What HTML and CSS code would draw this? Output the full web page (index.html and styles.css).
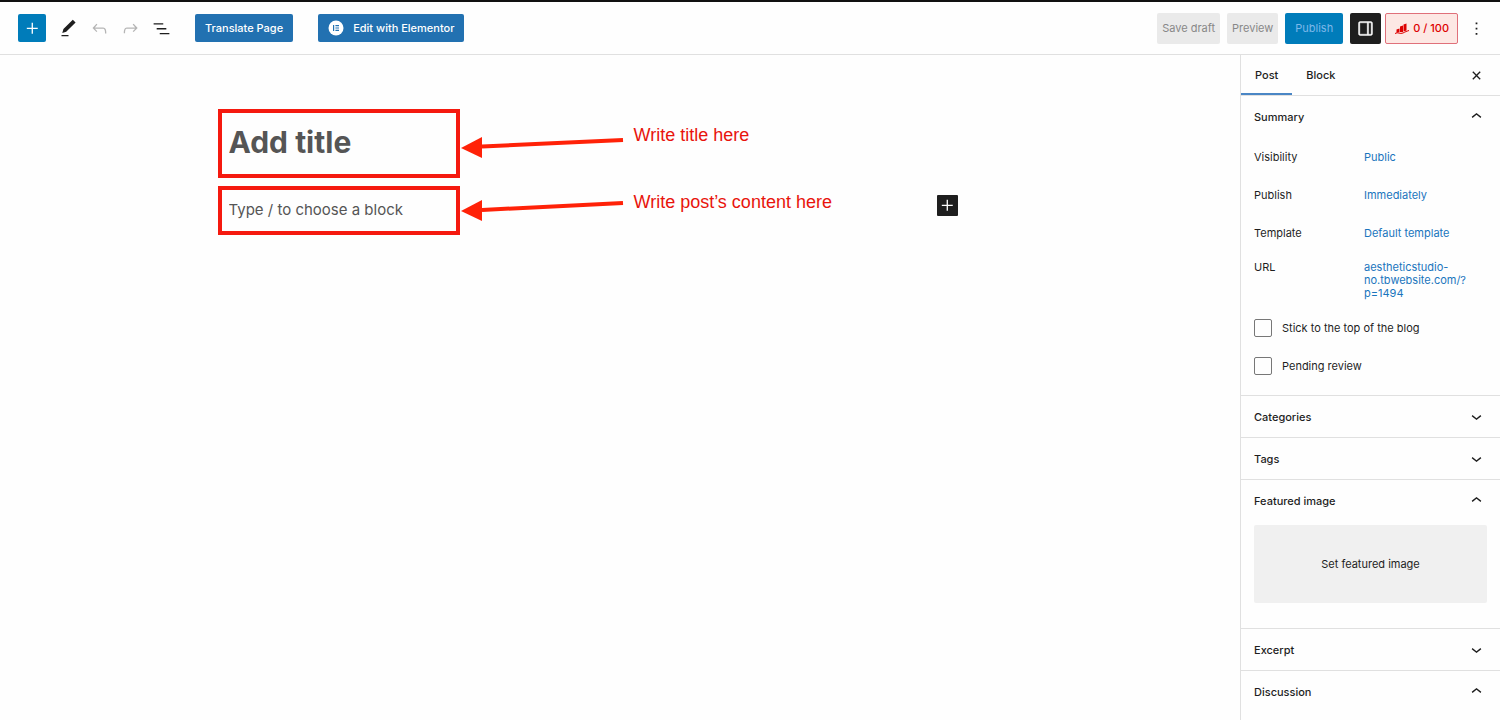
FILE: index.html
```html
<!DOCTYPE html>
<html lang="en">
<head>
  <meta charset="UTF-8">
  <meta name="viewport" content="width=device-width, initial-scale=1.0">
  <title>Add New Post</title>
  <link rel="stylesheet" href="styles.css">
</head>
<body>
  <header class="toolbar">
    <div class="toolbar-tools">
      <button class="icon-btn inserter" aria-label="Toggle block inserter">
        <svg class="icon" viewBox="0 0 24 24"><path d="M11 12.5V18h1.5v-5.5H18V11h-5.5V5.5H11V11H5.5v1.5H11z"/></svg>
      </button>
      <button class="icon-btn" aria-label="Tools">
        <svg class="icon" viewBox="0 0 24 24"><path d="M20.1 5.1L16.9 2 6.2 12.7l-1.3 4.4 4.5-1.3L20.1 5.1zM4 20.8h8v-1.5H4v1.5z"/></svg>
      </button>
      <button class="icon-btn" aria-label="Undo" disabled>
        <svg class="icon" viewBox="0 0 24 24"><path d="M18.3 11.7c-.6-.6-1.4-.9-2.3-.9H6.7l2.9-3.3-1.1-1-4.5 5L8.5 16l1-1-2.7-2.7H16c.5 0 .9.2 1.3.5 1 1 1 3.4 1 4.5v.3h1.5v-.2c0-1.5 0-4.3-1.5-5.7z"/></svg>
      </button>
      <button class="icon-btn" aria-label="Redo" disabled>
        <svg class="icon" viewBox="0 0 24 24"><path d="M15.6 6.5l-1.1 1 2.9 3.3H8c-.9 0-1.7.3-2.3.9-1.4 1.5-1.4 4.2-1.4 5.6v.2h1.5v-.3c0-1.1 0-3.5 1-4.5.3-.3.7-.5 1.3-.5h9.2L14.5 15l1.1 1.1 4.6-4.6-4.6-5z"/></svg>
      </button>
      <button class="icon-btn" aria-label="Document overview">
        <svg class="icon" viewBox="0 0 24 24"><path d="M3 6h11v1.5H3V6zm3.5 5.5h11V13h-11v-1.5zM21 17H10v1.5h11V17z"/></svg>
      </button>
    </div>
    <div class="toolbar-plugins">
      <button class="btn btn-blue">Translate Page</button>
      <button class="btn btn-blue btn-elementor">
        <svg class="elementor-logo" viewBox="0 0 16 16">
          <circle cx="8" cy="8" r="7.5" fill="#fff"/>
          <path d="M5 5h1.200v6H5zM7.400 5H11v1.200H7.400zM7.400 7.400H11v1.200H7.400zM7.400 9.800H11V11H7.400z" fill="#2271b1"/>
        </svg>
        Edit with Elementor
      </button>
    </div>
    <div class="toolbar-settings">
      <button class="btn btn-gray" disabled>Save draft</button>
      <button class="btn btn-gray" disabled>Preview</button>
      <button class="btn btn-publish" disabled>Publish</button>
      <div class="toolbar-panels">
        <button class="btn btn-sidebar" aria-label="Settings">
          <svg class="icon" viewBox="0 0 24 24"><path stroke="currentColor" stroke-width=".5" d="M18 4H6c-1.1 0-2 .9-2 2v12c0 1.1.9 2 2 2h12c1.1 0 2-.9 2-2V6c0-1.1-.9-2-2-2zm-4 14.5H6c-.3 0-.5-.2-.5-.5V6c0-.3.2-.5.5-.5h8v13zm4.5-.5c0 .3-.2.5-.5.5h-2.5v-13H18c.3 0 .5.2.5.5v12z"/></svg>
        </button>
        <button class="btn btn-score">
          <svg class="score-icon" viewBox="0 0 16 14"><path d="M2.500 8.500l3-1v3.500l-3 .8zM6 5.500l3-1V11H6zM9.500 3.500l3-1v7l-3 1z"/><path d="M1 12.500c3-2 5 1 8-.500s3-1.500 6-2.500" fill="none" stroke="currentColor"/></svg>
          0 / 100
        </button>
        <button class="icon-btn" aria-label="Options">
          <svg class="icon" viewBox="0 0 24 24"><path d="M13 19h-2v-2h2v2zm0-6h-2v-2h2v2zm0-6h-2V5h2v2z"/></svg>
        </button>
      </div>
    </div>
  </header>

  <div class="editor">
    <main class="canvas">
      <div class="row">
        <input class="field title-field" type="text" placeholder="Add title" aria-label="Add title">
        <svg class="arrow" viewBox="0 0 164 69"><path d="M22 37.5L163 31" stroke="#ff2208" stroke-width="4"/><path d="M1 39L22 28v21z" fill="#ff2208"/></svg>
        <p class="note title-note">Write title here</p>
      </div>
      <div class="row">
        <input class="field block-field" type="text" placeholder="Type / to choose a block" aria-label="Add block">
        <svg class="arrow" viewBox="0 0 164 49"><path d="M22 24L163 17" stroke="#ff2208" stroke-width="4"/><path d="M1 25L22 14v21z" fill="#ff2208"/></svg>
        <p class="note">Write post’s content here</p>
        <button class="add-block" aria-label="Add block">
          <svg class="icon" viewBox="0 0 24 24"><path d="M11 12.5V18h1.5v-5.5H18V11h-5.5V5.5H11V11H5.5v1.5H11z"/></svg>
        </button>
      </div>
    </main>

    <aside class="sidebar">
      <div class="tabs">
        <button class="tab active">Post</button>
        <button class="tab">Block</button>
        <button class="close" aria-label="Close settings">
          <svg class="icon" viewBox="0 0 24 24"><path d="M12 13.06l3.712 3.713 1.061-1.06L13.061 12l3.712-3.712-1.06-1.06L12 10.938 8.288 7.227l-1.061 1.06L10.939 12l-3.712 3.712 1.06 1.061L12 13.061z"/></svg>
        </button>
      </div>

      <section class="panel">
        <button class="panel-title">Summary
          <svg class="icon" viewBox="0 0 24 24"><path d="M6.5 12.4L12 8l5.5 4.4-.9 1.2L12 10l-4.5 3.6-1-1.2z"/></svg>
        </button>
        <div class="summary">
          <div class="summary-row"><span>Visibility</span><a href="#">Public</a></div>
          <div class="summary-row"><span>Publish</span><a href="#">Immediately</a></div>
          <div class="summary-row"><span>Template</span><a href="#">Default template</a></div>
          <div class="summary-row url-row"><span>URL</span><a href="#">aestheticstudio-<br>no.tbwebsite.com/?<br>p=1494</a></div>
          <label class="check-row"><input type="checkbox">Stick to the top of the blog</label>
          <label class="check-row"><input type="checkbox">Pending review</label>
        </div>
      </section>

      <section class="panel">
        <button class="panel-title">Categories
          <svg class="icon" viewBox="0 0 24 24"><path d="M17.5 11.6L12 16l-5.5-4.4.9-1.2L12 14l4.5-3.6 1 1.2z"/></svg>
        </button>
      </section>
      <section class="panel">
        <button class="panel-title">Tags
          <svg class="icon" viewBox="0 0 24 24"><path d="M17.5 11.6L12 16l-5.5-4.4.9-1.2L12 14l4.5-3.6 1 1.2z"/></svg>
        </button>
      </section>
      <section class="panel">
        <button class="panel-title">Featured image
          <svg class="icon" viewBox="0 0 24 24"><path d="M6.5 12.4L12 8l5.5 4.4-.9 1.2L12 10l-4.5 3.6-1-1.2z"/></svg>
        </button>
        <div class="featured">
          <button class="featured-btn">Set featured image</button>
        </div>
      </section>
      <section class="panel">
        <button class="panel-title">Excerpt
          <svg class="icon" viewBox="0 0 24 24"><path d="M17.5 11.6L12 16l-5.5-4.4.9-1.2L12 14l4.5-3.6 1 1.2z"/></svg>
        </button>
      </section>
      <section class="panel">
        <button class="panel-title">Discussion
          <svg class="icon" viewBox="0 0 24 24"><path d="M6.5 12.4L12 8l5.5 4.4-.9 1.2L12 10l-4.5 3.6-1-1.2z"/></svg>
        </button>
      </section>
    </aside>
  </div>
</body>
</html>
```
FILE: styles.css
```css
* {
  box-sizing: border-box;
}

body {
  display: flex;
  flex-direction: column;
  min-height: 100vh;
  margin: 0;
  background: #fefefe;
  color: #1e1e1e;
  font-family: Inter, "Liberation Sans", sans-serif;
  font-size: 11px;
}

button {
  padding: 0;
  border: none;
  background: none;
  color: inherit;
  font: inherit;
  cursor: pointer;
}

button:disabled {
  cursor: default;
}

a {
  color: #1a75bd;
  text-decoration: none;
}

.icon {
  display: block;
  width: 21px;
  height: 21px;
  fill: currentColor;
}

/* Toolbar */
.toolbar {
  display: flex;
  align-items: center;
  padding: 0 10px 0 18px;
  height: 55px;
  border-top: 2px solid #111;
  border-bottom: 1px solid #e0e0e0;
}

.toolbar-tools {
  display: flex;
  gap: 3px;
}

.icon-btn {
  display: flex;
  align-items: center;
  justify-content: center;
  width: 28px;
  height: 28px;
}

.icon-btn:disabled {
  color: #b5b5b5;
}

.inserter {
  margin-right: 5px;
  border-radius: 2px;
  background: #007cba;
  color: #fff;
}

.toolbar-plugins {
  display: flex;
  gap: 25px;
  margin-left: 20px;
}

.toolbar-settings {
  display: flex;
  align-items: center;
  gap: 7px;
  margin-left: auto;
}

.toolbar-panels {
  display: flex;
  align-items: center;
  gap: 4px;
}

.btn {
  display: flex;
  align-items: center;
  justify-content: center;
  height: 31px;
  padding: 0 5px;
  border-radius: 2px;
  white-space: nowrap;
}

.btn-blue {
  height: 28px;
  padding: 0 10px;
  background: #2271b1;
  color: #fff;
  font-weight: 500;
}

.btn-elementor {
  gap: 9px;
}

.elementor-logo {
  width: 16px;
  height: 16px;
}

.btn-gray {
  background: #eaeaea;
  color: #888;
}

.btn-publish {
  padding: 0 10px;
  background: #007cba;
  color: #7cb8ea;
}

.btn-sidebar {
  width: 31px;
  background: #1e1e1e;
  color: #fff;
}

.btn-score {
  gap: 3px;
  padding: 0 8px;
  border: 1px solid #e0707a;
  background: #fde8e4;
  color: #d00;
  font-weight: 500;
}

.score-icon {
  width: 16px;
  height: 14px;
  fill: currentColor;
}

/* Editor */
.editor {
  display: flex;
  flex: 1;
}

.canvas {
  display: flex;
  flex: 1;
  flex-direction: column;
  gap: 8px;
  padding: 54px 20px 20px 14.5%;
}

.row {
  display: flex;
  align-items: flex-start;
  max-width: 740px;
}

.field {
  width: 242px;
  padding: 0 7px;
  border: 4px solid #f5190f;
  background: none;
  color: #1e1e1e;
  font-family: inherit;
}

.field::placeholder {
  color: #555;
  opacity: 1;
}

.title-field {
  height: 69px;
  padding-bottom: 4px;
  font-size: 30px;
  font-weight: 700;
}

.block-field {
  height: 49px;
  padding-bottom: 2px;
  font-size: 15px;
}

.arrow {
  width: 164px;
}

.note {
  margin: 0;
  padding: 6px 10px;
  color: #e8140c;
  font-family: "Liberation Sans", Arial, sans-serif;
  font-size: 18px;
  line-height: 20px;
}

.title-note {
  padding-top: 16px;
}

.add-block {
  margin: 9px 0 0 auto;
  border-radius: 1px;
  background: #1e1e1e;
  color: #fff;
}

/* Sidebar */
.sidebar {
  width: 260px;
  border-left: 1px solid #e0e0e0;
}

.tabs {
  display: flex;
  height: 41px;
  padding-right: 13px;
  border-bottom: 1px solid #e0e0e0;
}

.tab {
  padding: 0 14px;
  border-top: 2px solid transparent;
  border-bottom: 2px solid transparent;
  font-weight: 500;
}

.tab.active {
  border-bottom-color: #4a86c5;
}

.close {
  margin-left: auto;
}

.panel {
  border-bottom: 1px solid #e0e0e0;
}

.panel-title {
  display: flex;
  align-items: center;
  justify-content: space-between;
  width: 100%;
  height: 41px;
  padding: 0 13px;
  font-weight: 500;
}

.summary {
  padding: 1px 13px 10px;
}

.summary-row {
  display: grid;
  grid-template-columns: 110px 1fr;
  align-items: center;
  min-height: 38px;
}

.url-row {
  align-items: start;
  padding: 9px 0;
  line-height: 13px;
}

.check-row {
  display: flex;
  align-items: center;
  gap: 10px;
  height: 38px;
}

.check-row input {
  appearance: none;
  width: 18px;
  height: 18px;
  margin: 0;
  border: 1px solid #777;
  border-radius: 2px;
}

.featured {
  padding: 4px 13px 25px;
}

.featured-btn {
  display: block;
  width: 100%;
  height: 78px;
  border-radius: 2px;
  background: #f0f0f0;
}

.panel:last-child {
  border-bottom: none;
}
```
